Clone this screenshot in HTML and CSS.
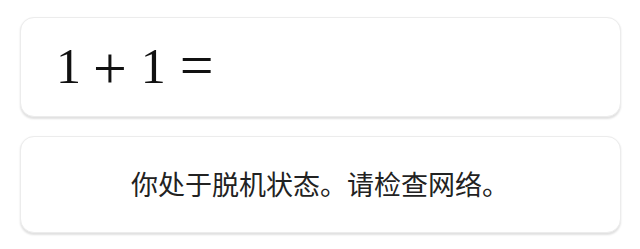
FILE: index.html
```html
<!DOCTYPE html>
<html lang="zh">
<head>
<meta charset="utf-8">
<link rel="stylesheet" href="styles.css">
</head>
<body>
<div class="page">
  <div class="card card-math">
    <div class="math"><span class="num">1</span><span class="op plus">+</span><span class="num num2">1</span><span class="op eq">=</span></div>
  </div>
  <div class="card card-msg">
    <p class="msg">你处于脱机状态。请检查网络。</p>
  </div>
</div>
</body>
</html>
```

FILE: styles.css
```css
html, body {
  margin: 0;
  padding: 0;
  background: #ffffff;
}
.page {
  width: 640px;
  height: 249px;
  box-sizing: border-box;
  padding: 17px 19px 0 20px;
  display: flex;
  flex-direction: column;
  gap: 19px;
}
.card {
  background: #ffffff;
  border: 1px solid #ececec;
  border-radius: 14px;
  box-shadow: 0 1.5px 2px rgba(0, 0, 0, 0.12);
  box-sizing: border-box;
  display: flex;
  align-items: center;
}
.card-math {
  height: 100px;
  padding-left: 35px;
}
.card-msg {
  height: 97px;
  justify-content: center;
}
.math {
  font-family: "Liberation Serif", "Times New Roman", serif;
  font-size: 50px;
  line-height: 60px;
  height: 60px;
  color: #111111;
  white-space: nowrap;
  margin-top: -2px;
}
.op {
  font-size: 60px;
  line-height: 0;
  display: inline-block;
}
.plus {
  margin-left: 12px;
  vertical-align: -5px;
}
.num2 {
  margin-left: 14px;
}
.eq {
  margin-left: 14px;
  vertical-align: -2px;
}
.msg {
  margin: -2px 0 0 -1px;
  font-family: "Noto Sans CJK SC", "Noto Sans", sans-serif;
  font-size: 27px;
  line-height: 1;
  color: #222222;
}
```
